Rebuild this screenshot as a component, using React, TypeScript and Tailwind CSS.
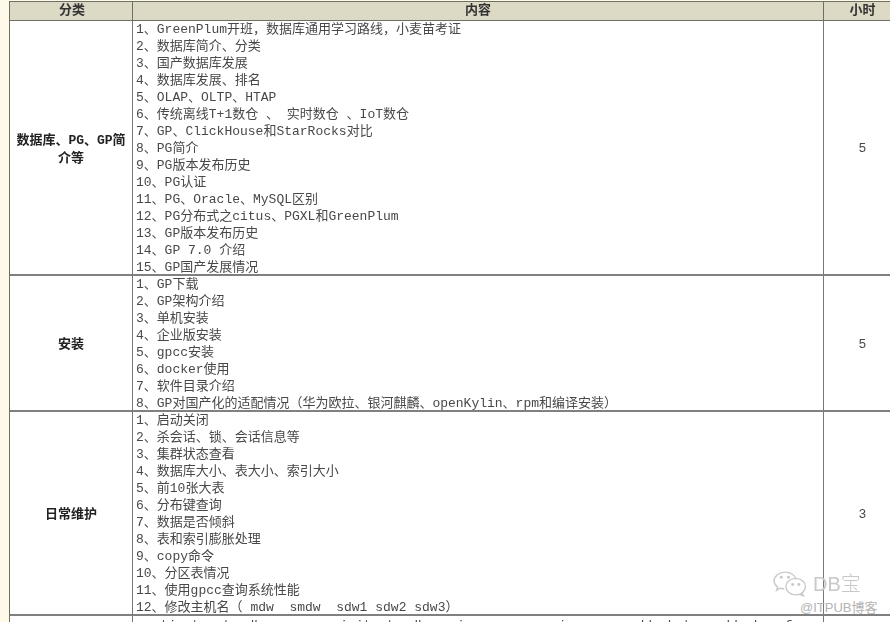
const sections = [
  {
    name: "数据库、PG、GP简介等",
    hours: "5",
    items: [
      "1、GreenPlum开班，数据库通用学习路线，小麦苗考证",
      "2、数据库简介、分类",
      "3、国产数据库发展",
      "4、数据库发展、排名",
      "5、OLAP、OLTP、HTAP",
      "6、传统离线T+1数仓 、 实时数仓 、IoT数仓",
      "7、GP、ClickHouse和StarRocks对比",
      "8、PG简介",
      "9、PG版本发布历史",
      "10、PG认证",
      "11、PG、Oracle、MySQL区别",
      "12、PG分布式之citus、PGXL和GreenPlum",
      "13、GP版本发布历史",
      "14、GP 7.0 介绍",
      "15、GP国产发展情况",
    ],
  },
  {
    name: "安装",
    hours: "5",
    items: [
      "1、GP下载",
      "2、GP架构介绍",
      "3、单机安装",
      "4、企业版安装",
      "5、gpcc安装",
      "6、docker使用",
      "7、软件目录介绍",
      "8、GP对国产化的适配情况（华为欧拉、银河麒麟、openKylin、rpm和编译安装）",
    ],
  },
  {
    name: "日常维护",
    hours: "3",
    items: [
      "1、启动关闭",
      "2、杀会话、锁、会话信息等",
      "3、集群状态查看",
      "4、数据库大小、表大小、索引大小",
      "5、前10张大表",
      "6、分布键查询",
      "7、数据是否倾斜",
      "8、表和索引膨胀处理",
      "9、copy命令",
      "10、分区表情况",
      "11、使用gpcc查询系统性能",
      "12、修改主机名（ mdw  smdw  sdw1 sdw2 sdw3）",
    ],
  },
];

export default function App() {
  return (
    <div className="relative h-[622px] w-[890px] overflow-hidden bg-[#fff9ea] pl-[9px] pt-px font-['Liberation_Mono','Noto_Sans_CJK_SC',monospace] text-[13px] text-[#484848]">
      <div className="w-[892px] border-l border-[#6f6f66] bg-white blur-[0.5px]">
        <div className="grid h-[20px] grid-cols-[122px_691px_1fr] border-y border-[#6f6f66] bg-[#dcd9c4] font-bold leading-[18px] text-[#333]">
          <div className="pl-[2px] text-center">分类</div>
          <div className="border-l border-[#6f6f66] text-center">内容</div>
          <div className="border-l border-[#6f6f66] text-center">小时</div>
        </div>
        {sections.map((s) => (
          <div key={s.name} className="grid grid-cols-[122px_691px_1fr] border-b-2 border-[#808080]">
            <div className="flex items-center justify-center px-1 pt-[4px] text-center font-bold leading-[18px] text-[#222]">
              {s.name}
            </div>
            <div className="-mb-0.5 whitespace-pre border-l border-[#77777a] pl-[3px] leading-[17px]">
              {s.items.map((item) => (
                <div key={item} className="h-[17px]">
                  {item}
                </div>
              ))}
            </div>
            <div className="flex items-center justify-center border-l border-[#77777a] pt-[3px]">{s.hours}</div>
          </div>
        ))}
        <div className="grid h-[20px] grid-cols-[122px_691px_1fr]">
          <div />
          <div className="whitespace-pre border-l border-[#77777a] pl-[12px] pt-px leading-[17px]">
            {"activate standby         init standby  mirrors expansion      add  bat   add  k   f"}
          </div>
          <div className="border-l border-[#77777a]" />
        </div>
      </div>

      {/* watermark */}
      <div className="absolute left-[772px] top-[570px] flex h-[27px] items-center gap-[6px] text-[#c8c8c8] blur-[0.5px]">
        <svg width="35" height="27" viewBox="0 0 34 26" fill="none" stroke="currentColor" strokeWidth="1.3">
          <path d="M13 2C7 2 2 6 2 10.500C2 13 3.500 15 5.500 16.500L4.500 19.500L8 17.500C9.500 18 11 18.300 12 18.300" />
          <path d="M13 2C18 2 22.500 5 23.500 9" />
          <ellipse cx="23" cy="16" rx="9.500" ry="8" />
          <path d="M29 22L30.500 25L26.500 23.500" />
          <circle cx="9" cy="7" r="0.8" fill="currentColor" />
          <circle cx="16" cy="7" r="0.8" fill="currentColor" />
          <circle cx="20" cy="14" r="0.8" fill="currentColor" />
          <circle cx="26" cy="14" r="0.8" fill="currentColor" />
        </svg>
        <span className="font-['Liberation_Sans','Noto_Sans_CJK_SC',sans-serif] text-[20px] font-light leading-none">DB宝</span>
      </div>
      <div className="absolute left-[800px] top-[600px] font-['Liberation_Sans','Noto_Sans_CJK_SC',sans-serif] text-[13px] leading-[15px] text-[#b4b4b4]">
        @ITPUB博客
      </div>
    </div>
  );
}
